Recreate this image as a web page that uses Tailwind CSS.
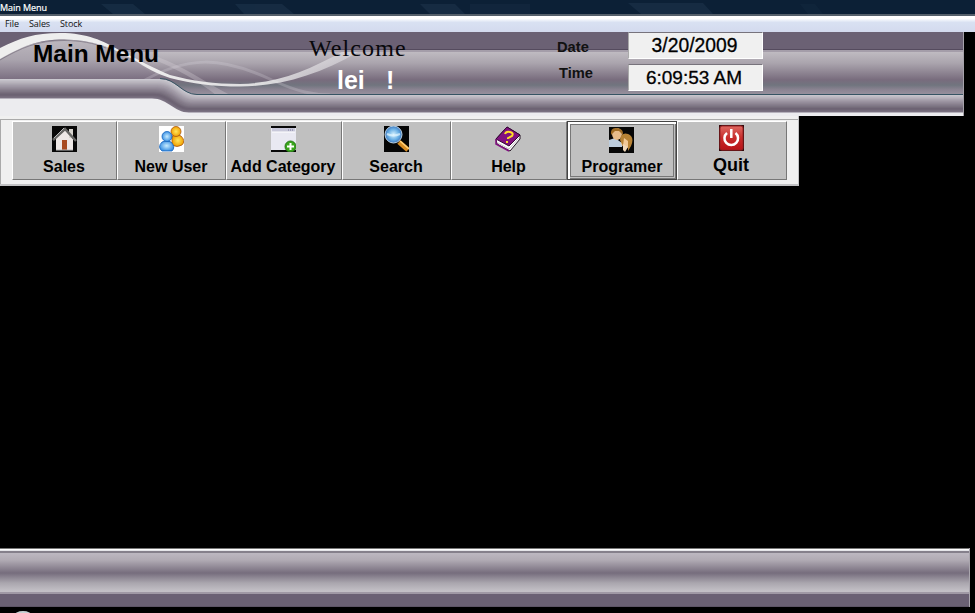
<!DOCTYPE html>
<html lang="en">
<head>
<meta charset="utf-8">
<title>Main Menu</title>
<script src="https://cdn.jsdelivr.net/npm/@tailwindcss/browser@4"></script>
</head>
<body class="w-[975px] h-[613px] overflow-hidden bg-black flex flex-col text-black font-['Liberation_Sans',Arial,sans-serif]">
<div class="relative h-4 shrink-0 bg-[#0c2036] border-b-2 border-[#55606b] overflow-hidden">
  <svg class="absolute inset-0" width="975" height="14"><g fill="#29415a" opacity=".35"><path d="M101 4h32l12 10h-32zM235 4h47l12 10h-50zM420 4h35l10 10h-35zM628 3h75l10 11h-72z"/><path d="M470 4h60v10h-60z" opacity=".5"/><path d="M800 4h15l8 10h-15z" opacity=".4"/></g></svg>
  <div class="relative text-white text-[9px] leading-[15px] tracking-[-0.050px] font-['Open_Sans','Noto_Sans',sans-serif] [-webkit-text-stroke:0.200px_white]">Main Menu</div>
</div>
<nav class="h-4 shrink-0 flex items-start gap-[10px] pl-[5px] text-[9px] leading-[15px] tracking-[-0.100px] text-[#111] font-['Open_Sans','Noto_Sans',sans-serif] bg-linear-to-b from-white from-15% via-[#d9e1f2] via-40% to-[#d3daee]">
  <span class="w-[14px]">File</span><span class="w-[21px]">Sales</span><span>Stock</span>
</nav>
<header class="relative w-[964px] h-[84px] shrink-0">
  <svg class="absolute inset-0" width="964" height="84" viewBox="0 0 964 84">
    <defs>
      <linearGradient id="mid" x1="0" y1="18" x2="0" y2="62" gradientUnits="userSpaceOnUse"><stop offset="0" stop-color="#c3bfc5"/><stop offset=".3" stop-color="#aaa4ad"/><stop offset=".68" stop-color="#786c7d"/><stop offset=".8" stop-color="#71757f"/><stop offset=".9" stop-color="#8a8391"/><stop offset="1" stop-color="#96909c"/></linearGradient>
      <linearGradient id="hill" x1="0" y1="8" x2="0" y2="47" gradientUnits="userSpaceOnUse"><stop offset="0" stop-color="#bcb7be"/><stop offset=".5" stop-color="#aaa4ae"/><stop offset="1" stop-color="#7c7082"/></linearGradient>
      <linearGradient id="wv" x1="130" y1="0" x2="357" y2="0" gradientUnits="userSpaceOnUse"><stop offset="0" stop-color="#eee"/><stop offset=".6" stop-color="#eee" stop-opacity=".85"/><stop offset="1" stop-color="#e5e3e7" stop-opacity=".45"/></linearGradient>
    </defs>
    <path d="M0 0H964V84H0z" fill="#6b6174"/>
    <path d="M0 18H964V62H0z" fill="url(#mid)"/>
    <path d="M0 17.500H964" stroke="#554b5e"/>
    <path d="M0 19H964" stroke="#a49da9" stroke-width="2"/>
    <path d="M0 26C20 13 40 8 68 8C96 8 114 17 132 26L160 48H0z" fill="url(#hill)"/>
    <path d="M138 52C188 22 222 25 272 48C298 60 314 63 330 63" fill="none" stroke="#ddd8df" stroke-opacity=".25" stroke-width="3"/>
    <path d="M158 25C185 35 203 49 230 63H216C198 49 176 36 150 26z" fill="#ddd8df" fill-opacity=".3"/>
    <path d="M0 16C20 6 35 1 60 1C88 1 103 9 119 18C135 26 157 38 170 43C192 49 215 52 240 52C280 51 308 38 342 20H358C319 43 281 54 240 54.500C215 54.500 192 52 170 46C157 42 145 35 134 28C112 15 92 8 64 7.500C37 7.500 21 15 0 27z" fill="url(#wv)"/>
    <path d="M0 28C21 16 37 8.500 64 8.500C80 8.500 94 11 106 16" fill="none" stroke="#6e6674" stroke-opacity=".6"/>
    <g id="ribbon"></g>
    <path d="M160 46.500C176 46.500 182 62.500 197 62.500H964" fill="none" stroke="#365463"/>
    <path d="M963.500 0V84" stroke="#a6a2aa"/>
  </svg>
  <div class="relative flex items-start">
    <h1 class="w-[309px] pl-[33px] pt-[7px] text-[24.400px] leading-[30px] font-bold whitespace-nowrap">Main Menu</h1>
    <div class="w-[248px]">
      <div class="pt-[2px] text-[24px] leading-[28px] tracking-[1.100px] font-['Liberation_Serif',serif] text-[#08080c]">Welcome</div>
      <div class="flex pl-[28px] pt-[3px] text-[25px] leading-[30px] font-bold text-white"><span class="w-[49px]">lei</span><span>!</span></div>
    </div>
    <div class="w-[71px] pt-[6px] text-[14.700px] leading-[18px] font-bold text-[#111]">
      <div>Date</div><div class="pt-[8px] pl-[2px]">Time</div>
    </div>
    <div class="flex flex-col gap-[5px] text-[19.300px] leading-[25px] text-center [-webkit-text-stroke:0.300px_black]">
      <div class="w-[135px] h-[27px] bg-[#f0f0f0] border border-t-[#77737c] border-l-[#aaa] border-white pr-[2px]">3/20/2009</div>
      <div class="w-[135px] h-[27px] bg-[#f0f0f0] border border-t-[#77737c] border-l-[#aaa] border-white text-[19px] pr-[3px]">6:09:53 AM</div>
    </div>
  </div>
</header>
<div class="w-[799px] h-[70px] shrink-0 bg-[#f0f0f0] border-b-2 border-r border-[#c2c2c4] pt-[3px]">
  <div class="h-[65px] flex border-t border-l border-[#aaa] pl-[11px] pt-px text-[16px] leading-[18px] font-bold text-center">
    <div class="w-[105px] h-[59px] bg-[#c0c0c0] border border-t-white border-l-white border-[#777] pt-[4px] pr-px flex flex-col items-center">
      <svg width="25" height="26" viewBox="0 0 25 26"><path d="M0 0h25v26H0z" fill="#080808"/><path d="M4 12L13 4l8 9v11H4z" fill="#eee9e7"/><path d="M17 3h4v9h-4z" fill="#d8d5cf"/><path d="M1 14L13 3l11 12" stroke="#666664" stroke-width="2.500" fill="none"/><path d="M2 12L12 2" stroke="#bbb"/><path d="M10 14h5v10h-5z" fill="#a84b20"/><path d="M4 24h17" stroke="#bbb"/></svg>
      <div class="pt-[6px]">Sales</div>
    </div>
    <div class="w-[109px] h-[59px] bg-[#c0c0c0] border border-t-white border-l-white border-[#777] pt-[4px] pr-px flex flex-col items-center">
      <svg width="25" height="26" viewBox="0 0 25 26"><defs><radialGradient id="blue"><stop stop-color="#c9edff"/><stop offset="1" stop-color="#3d92e4"/></radialGradient><radialGradient id="gold"><stop stop-color="#ffe65e"/><stop offset="1" stop-color="#f0a000"/></radialGradient></defs><path d="M0 0h25v26H0z" fill="#fff"/><g stroke="#a85510" stroke-width=".8"><path d="M13 10Q18 7 22 10Q27 15 23 19Q18 22 13 19z" fill="url(#gold)"/><circle cx="17" cy="5.500" r="5" fill="url(#gold)"/></g><g stroke="#1763bb" stroke-width=".8"><path d="M3 16Q8 13 12 16Q17 21 13 25H3Q-2 21 3 16z" fill="url(#blue)"/><circle cx="8" cy="10.500" r="5" fill="url(#blue)"/></g></svg>
      <div class="pt-[6px]">New User</div>
    </div>
    <div class="w-[116px] h-[59px] bg-[#c0c0c0] border border-t-white border-l-white border-[#777] pt-[4px] flex flex-col items-center">
      <svg class="-ml-px" width="25" height="26" viewBox="0 0 25 26"><path d="M0 0h25v26H0z" fill="#e9e9f2"/><path d="M0 1h25M0 25h25" stroke="#080808" stroke-width="2"/><path d="M1 2h23v4H1z" fill="#c8c8da"/><path d="M17 4h6" stroke="#777799" stroke-dasharray="1 1"/><path d="M1 6h23" stroke="#fff"/><circle cx="19.500" cy="20.500" r="5.500" fill="#39a51b" stroke="#257718"/><path d="M19.500 17v7M16 20.500h7" stroke="#fff" stroke-width="2"/></svg>
      <div class="pt-[6px] pr-[2px] whitespace-nowrap">Add Category</div>
    </div>
    <div class="w-[109px] h-[59px] bg-[#c0c0c0] border border-t-white border-l-white border-[#777] pt-[4px] pr-px flex flex-col items-center">
      <svg width="25" height="26" viewBox="0 0 25 26"><defs><radialGradient id="lens"><stop stop-color="#d7f2ff"/><stop offset=".65" stop-color="#66ade4"/><stop offset="1" stop-color="#4278bd"/></radialGradient></defs><path d="M0 0h25v26H0z" fill="#050505"/><path d="M15 16l9 8" stroke="#d88d24" stroke-width="5"/><path d="M16 15l9 8" stroke="#ffd27a" stroke-width="1.500"/><circle cx="9.500" cy="8.500" r="8.500" fill="url(#lens)" stroke="#bdd5e7"/><path d="M3 8q6 3 13 0" stroke="#e7f8ff" stroke-width="2" fill="none" opacity=".7"/></svg>
      <div class="pt-[6px]">Search</div>
    </div>
    <div class="w-[116px] h-[59px] bg-[#c0c0c0] border border-t-white border-l-white border-[#777] pt-[4px] pr-px flex flex-col items-center">
      <svg width="27" height="26" viewBox="0 0 27 26"><path d="M1 13L12 1l13 8v4L15 25 2 18z" fill="#fff" stroke="#201020"/><path d="M1 13L12 1l13 8-11 11z" fill="#81117f" stroke="#350735"/><path d="M1 13v5l13 7" stroke="#81117f" stroke-width="1.500" fill="none"/><path d="M3 17l11 6 10-11" stroke="#aaa" stroke-width=".7" fill="none"/><path d="M10 8q1-3 5-2t2 4l-4 2v1M12 15v2" fill="none" stroke="#ffdf26" stroke-width="2"/></svg>
      <div class="pt-[6px]">Help</div>
    </div>
    <div class="relative w-[110px] h-[59px] bg-[#c0c0c0] border border-[#444] pt-[4px] flex flex-col items-center shadow-[inset_2px_2px_0_white,inset_-1px_-1px_0_#777]">
      <div class="absolute inset-[2px] border border-[#777]"></div>
      <svg class="relative -ml-px mt-px" width="25" height="26" viewBox="0 0 25 26"><path d="M0 0h25v26H0z" fill="#070707"/><path d="M0 20v-7l6-2 7 5v4z" fill="#bdcddd"/><ellipse cx="8" cy="7" rx="5" ry="6" fill="#e6bb8b"/><path d="M2 8Q1 0 8 1t6 7L10 4 6 4z" fill="#9f6c26"/><ellipse cx="17" cy="14" rx="5" ry="7" fill="#f1c998"/><path d="M11 13Q12 5 19 7q7 3 3 12l-3 5 0-10-4-3-1 8z" fill="#b88335"/><path d="M14 23v-6l5 3-3 5z" fill="#efd7b9"/></svg>
      <div class="relative pt-[5px]">Programer</div>
    </div>
    <div class="w-[110px] h-[59px] bg-[#c0c0c0] border border-t-white border-l-white border-[#777] pt-[3px] pr-[2px] flex flex-col items-center">
      <svg width="25" height="26" viewBox="0 0 25 26"><defs><linearGradient id="red" x2="0" y2="1"><stop stop-color="#de6861"/><stop offset=".5" stop-color="#c72c2b"/><stop offset="1" stop-color="#b91218"/></linearGradient></defs><path d="M0 0h25v26H0z" fill="#350b0d"/><rect x="1" y="1" width="23" height="24" rx="2" fill="url(#red)" stroke="#9c2022"/><path d="M8 8a6.800 6.800 0 1 0 8.500 0" fill="none" stroke="#fff" stroke-width="2.500"/><path d="M12.300 4v9" stroke="#fff" stroke-width="2.500"/></svg>
      <div class="pt-[5px] text-[18px]">Quit</div>
    </div>
  </div>
</div>
<main class="flex-1"></main>
<footer class="w-[970px] h-[59px] shrink-0 border-r border-[#a9a5ad] bg-[linear-gradient(to_bottom,#777_0px,#777_1px,#fff_1px,#fff_2px,#e5e5e9_2px,#e5e5e9_3px,#85808b_3px,#85808b_5px,#bdb8c1_5px,#b1abb4_12px,#766d7d_25px,#aaa6ae_35px,#c3c0c6_43px,#c3c0c6_44px,#a099a5_44px,#a099a5_46px,#6b6174_46px,#6b6174_58px,#514959_59px)]"></footer>
<div class="h-[6px] shrink-0 pl-[14px] overflow-hidden"><svg width="18" height="6"><ellipse cx="9" cy="9" rx="9" ry="5" fill="#c6d1d3"/></svg></div>
<script>
  // Shaded ribbon: stacked fills follow the bend from the light top edge to the pale base.
  const ribbon = document.getElementById('ribbon');
  const stops = [[0,[202,200,207]],[.35,[159,152,164]],[.8,[106,96,112]],[1,[128,120,136]]];
  const tint = t => {
    const i = t < .35 ? 0 : t < .8 ? 1 : 2;
    const [a, from] = stops[i], [b, to] = stops[i + 1];
    return 'rgb(' + from.map((v, n) => Math.round(v + (to[n] - v) * (t - a) / (b - a))).join(',') + ')';
  };
  const steps = 18;
  for (let k = 0; k <= steps + 1; k++) {
    const t = Math.min(k / steps, 1);
    const l = 47 + 19 * t, r = 62.5 + 17.5 * t, x = 160 - 8 * t;
    const drop = k > steps ? .5 : 0;
    const p = document.createElementNS('http://www.w3.org/2000/svg', 'path');
    p.setAttribute('d', `M0 84V${l + drop}H${x}C${x + 16} ${l + drop} ${x + 22} ${r + drop} ${x + 37} ${r + drop}H964V84z`);
    p.setAttribute('fill', k > steps ? '#ececef' : tint(t));
    ribbon.appendChild(p);
  }
</script>
</body>
</html>
